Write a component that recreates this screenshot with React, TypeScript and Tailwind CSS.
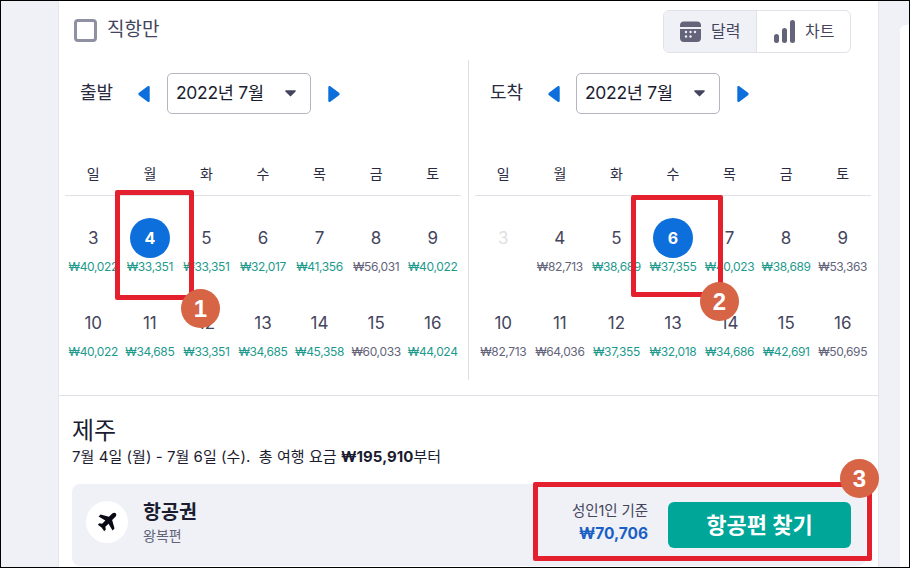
import React from 'react';

const FONT = "font-['Inter','Noto_Sans_CJK_KR',sans-serif]";

type Day = { d: string; p?: string; cheap?: boolean; sel?: boolean; off?: boolean };

const depart: Day[][] = [
  [
    { d: '3', p: '₩40,022', cheap: true },
    { d: '4', p: '₩33,351', cheap: true, sel: true },
    { d: '5', p: '₩33,351', cheap: true },
    { d: '6', p: '₩32,017', cheap: true },
    { d: '7', p: '₩41,356', cheap: true },
    { d: '8', p: '₩56,031' },
    { d: '9', p: '₩40,022', cheap: true },
  ],
  [
    { d: '10', p: '₩40,022', cheap: true },
    { d: '11', p: '₩34,685', cheap: true },
    { d: '12', p: '₩33,351', cheap: true },
    { d: '13', p: '₩34,685', cheap: true },
    { d: '14', p: '₩45,358', cheap: true },
    { d: '15', p: '₩60,033' },
    { d: '16', p: '₩44,024', cheap: true },
  ],
];

const arrive: Day[][] = [
  [
    { d: '3', off: true },
    { d: '4', p: '₩82,713' },
    { d: '5', p: '₩38,689', cheap: true },
    { d: '6', p: '₩37,355', cheap: true, sel: true },
    { d: '7', p: '₩40,023', cheap: true },
    { d: '8', p: '₩38,689', cheap: true },
    { d: '9', p: '₩53,363' },
  ],
  [
    { d: '10', p: '₩82,713' },
    { d: '11', p: '₩64,036' },
    { d: '12', p: '₩37,355', cheap: true },
    { d: '13', p: '₩32,018', cheap: true },
    { d: '14', p: '₩34,686', cheap: true },
    { d: '15', p: '₩42,691', cheap: true },
    { d: '16', p: '₩50,695' },
  ],
];

const weekdays = ['일', '월', '화', '수', '목', '금', '토'];

function Arrow({ right }: { right?: boolean }) {
  return (
    <svg width="12" height="16" viewBox="1 1 10 14" className="shrink-0">
      {right ? (
        <path d="M1 2.2c0-1 1-1.5 1.8-.9l7.6 5.6c.7.5.7 1.6 0 2.2l-7.6 5.6c-.8.6-1.8 0-1.8-.9z" fill="#0c6fdc" />
      ) : (
        <path d="M11 2.2c0-1-1-1.5-1.8-.9L1.6 6.9c-.7.5-.7 1.6 0 2.2l7.6 5.6c.8.6 1.8 0 1.8-.9z" fill="#0c6fdc" />
      )}
    </svg>
  );
}

function Month({ label, days, gap }: { label: string; days: Day[][]; gap: string }) {
  return (
    <div className="w-[396px] flex flex-col">
      <div className="h-[41px] flex items-center pl-[15px]">
        <span className="w-[58px] text-[18px] text-[#2a2b3f] -mt-[3px]">{label}</span>
        <Arrow />
        <div className={`${gap} w-[144px] h-[41px] border border-[#b3b5c0] rounded-[5px] flex items-center justify-between pl-[8px] pr-[14px]`}>
          <span className="text-[17.5px] tracking-[-0.3px] text-[#1b1c30] -mt-[1px]">2022년 7월</span>
          <svg width="11" height="7" viewBox="0 0 12 7">
            <path d="M1 0h10c.6 0 1 .7.6 1.2L6.6 6.3a.8.8 0 0 1-1.2 0L.4 1.2C0 .7.4 0 1 0z" fill="#44455c" />
          </svg>
        </div>
        <div className="ml-[17px]">
          <Arrow right />
        </div>
      </div>
      <div className="mt-[46px] h-[36px] grid grid-cols-7 border-b border-[#e0e2e7]">
        {weekdays.map((w) => (
          <div key={w} className="text-center text-[14px] leading-[20px] text-[#2a2b3f] mt-[4px]">
            {w}
          </div>
        ))}
      </div>
      <div className="pt-[22px] flex flex-col gap-[23px]">
        {days.map((row, i) => (
          <div key={i} className="grid grid-cols-7 h-[62px]">
            {row.map((c) => (
              <div key={c.d} className="flex flex-col items-center">
                <div
                  className={
                    c.sel
                      ? 'w-[40px] h-[40px] rounded-full bg-[#0c6fdc] text-white font-bold text-[16px] flex items-center justify-center'
                      : `h-[40px] pt-[2px] flex items-center justify-center text-[17px] ${c.off ? 'text-[#dfe0e4]' : 'text-[#44455c]'}`
                  }
                >
                  {c.d}
                </div>
                {c.p && (
                  <div
                    className={`mt-[1px] text-[12px] leading-[16px] tracking-[-0.35px] whitespace-nowrap ${
                      c.cheap ? 'text-[#1d9a8c]' : 'text-[#63647a]'
                    }`}
                  >
                    {c.p}
                  </div>
                )}
              </div>
            ))}
          </div>
        ))}
      </div>
    </div>
  );
}

function Badge({ n, className }: { n: string; className: string }) {
  return (
    <div
      className={`absolute w-[39px] h-[39px] rounded-full bg-[#d66445] text-white font-bold text-[24px] flex items-center justify-center font-['Liberation_Sans',sans-serif] ${className}`}
    >
      {n}
    </div>
  );
}

export default function App() {
  return (
    <div className={`${FONT} relative w-[910px] h-[568px] overflow-hidden bg-[#eff1f7] flex`}>
      {/* main card */}
      <div className="ml-[58px] w-[821px] h-full bg-white border-x border-[#e4e6ea] flex flex-col">
        {/* filter row */}
        <div className="h-[60px] flex items-start justify-between pl-[15px] pr-[27px] pt-[10px]">
          <label className="flex items-center gap-[10px] mt-[9px]">
            <span className="w-[23px] h-[23px] rounded-[4px] border-[3px] border-[#8f91a3] bg-white" />
            <span className="text-[19px] leading-[22px] text-[#44455c] -mt-[1px]">직항만</span>
          </label>
          <div className="flex h-[43px] w-[188px] border border-[#e0e2e7] rounded-[6px] overflow-hidden">
            <div className="w-[93px] bg-[#eff1f7] border-r border-[#e0e2e7] flex items-center pl-[16px] gap-[10px]">
              <svg width="21" height="21" viewBox="0 0 21 21">
                <path
                  fillRule="evenodd"
                  d="M4 .5h13a4 4 0 0 1 4 4V6H0V4.500a4 4 0 0 1 4-4zM0 8h21v9a4 4 0 0 1-4 4H4a4 4 0 0 1-4-4z"
                  fill="#63647a"
                />
                <g fill="#eff1f7">
                  <circle cx="6" cy="11" r="1.2" />
                  <circle cx="10.500" cy="11" r="1.2" />
                  <circle cx="15" cy="11" r="1.2" />
                  <circle cx="6" cy="15.500" r="1.200" />
                  <circle cx="10.500" cy="15.500" r="1.200" />
                </g>
              </svg>
              <span className="text-[16px] text-[#44455c] -mt-[2px]">달력</span>
            </div>
            <div className="flex-1 flex items-center pl-[17px] gap-[10px]">
              <svg width="21" height="23" viewBox="0 0 21 23">
                <g fill="#63647a">
                  <rect x="0" y="14" width="5" height="9" rx="2.500" />
                  <rect x="8" y="8" width="5" height="15" rx="2.500" />
                  <rect x="16" y="0" width="5" height="23" rx="2.500" />
                </g>
              </svg>
              <span className="text-[16px] text-[#44455c] -mt-[2px]">차트</span>
            </div>
          </div>
        </div>

        {/* calendars */}
        <div className="h-[320px] flex pl-[6px]">
          <div className="pt-[13px]">
            <Month label="출발" days={depart} gap="ml-[17px]" />
          </div>
          <div className="ml-[7px] w-px h-[320px] bg-[#dcdee4]" />
          <div className="ml-[6px] pt-[13px]">
            <Month label="도착" days={arrive} gap="ml-[16px]" />
          </div>
        </div>

        {/* trip summary */}
        <div className="mt-[15px] border-t border-[#e0e2e7] pl-[13px] pr-[12px] pt-[19px] flex flex-col">
          <div className="text-[24px] leading-[32px] text-[#1b1c30]">제주</div>
          <div className="text-[15px] leading-[20px] tracking-[0.05px] text-[#1b1c30]">
            7월 4일 (월) - 7월 6일 (수). &nbsp;총 여행 요금 <span className="font-bold">₩195,910</span>부터
          </div>
          <div className="mt-[17px] h-[82px] rounded-[8px] bg-[#eff1f7] flex items-center pl-[14px] pr-[15px]">
            <div className="w-[42px] h-[42px] rounded-full bg-white flex items-center justify-center -mt-[7px]">
              <svg width="22" height="22" viewBox="0 0 24 24" fill="#0a0a14">
                <path d="M21.500 2.500c-1-1-2.700-.8-3.800.3l-3.600 3.600L5 3.800 2.800 6l7.400 4.300-3.500 3.500-3-.5L2 15l4.100 2.900L9 22l1.700-1.700-.5-3 3.500-3.500 4.300 7.400 2.200-2.200-2.600-9.100 3.600-3.600c1.100-1.100 1.300-2.800.3-3.800z" />
              </svg>
            </div>
            <div className="ml-[15px] flex flex-col -mt-[5px]">
              <span className="text-[19.500px] leading-[24px] font-bold text-[#1b1c30]">항공권</span>
              <span className="mt-[3px] text-[14px] leading-[18px] text-[#63647a]">왕복편</span>
            </div>
            <div className="ml-auto flex flex-col items-end -mt-[3px]">
              <span className="text-[14.500px] leading-[18px] tracking-[-0.1px] text-[#44455c]">성인1인 기준</span>
              <span className="mt-[3px] text-[15.500px] leading-[22px] font-bold text-[#1b5fc4]">₩70,706</span>
            </div>
            <button className="ml-[20px] w-[183px] h-[46px] rounded-[6px] bg-[#00a698] text-white text-[22px] font-bold">
              항공편 찾기
            </button>
          </div>
        </div>
      </div>

      {/* neighbouring card at the right edge */}
      <div className="ml-[21px] mt-[25px] flex-1 bg-white rounded-tl-[6px]" />

      {/* screenshot frame */}
      <div className="absolute inset-0 border-[1px] border-black pointer-events-none" />

      {/* hand-drawn annotations */}
      <div className="absolute left-[115px] top-[190px] w-[79px] h-[110px] border-[5px] border-[#e5202e] rounded-[2px]" />
      <div className="absolute left-[631px] top-[195px] w-[92px] h-[102px] border-[5px] border-[#e5202e] rounded-[2px]" />
      <div className="absolute left-[533px] top-[482px] w-[339px] h-[79px] border-[5px] border-[#e5202e] rounded-[2px]" />
      <Badge n="1" className="left-[181px] top-[289px]" />
      <Badge n="2" className="left-[700px] top-[282px]" />
      <Badge n="3" className="left-[840px] top-[459px]" />
    </div>
  );
}
